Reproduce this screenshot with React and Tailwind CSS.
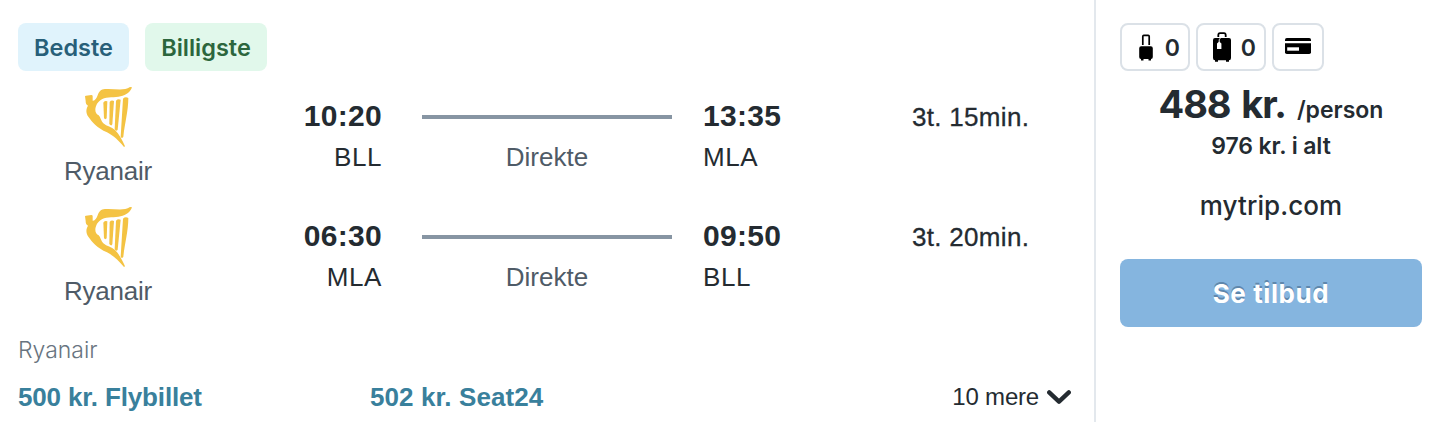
import clsx from "clsx";

const legs = [
  {
    airline: "Ryanair",
    departure: "10:20",
    from: "BLL",
    arrival: "13:35",
    to: "MLA",
    stops: "Direkte",
    duration: "3t. 15min.",
  },
  {
    airline: "Ryanair",
    departure: "06:30",
    from: "MLA",
    arrival: "09:50",
    to: "BLL",
    stops: "Direkte",
    duration: "3t. 20min.",
  },
];

function HarpLogo() {
  return (
    <svg width="47" height="60" viewBox="0 0 141 180" fill="#f4c343">
      <path d="M0 28Q0 26 3 26L19 24Q23 24 23 28L23 41C30 42 34 35 38 25C42 13 48 7 60 6C88 4 115 13 135 0L141 1C137 14 124 24 107 28C90 33 66 29 52 36C38 43 31 57 31 69C31 77 35 82 41 85C46 89 48 102 55 109C65 118 80 120 90 129C103 142 112 160 120 178L117 180C101 161 87 147 66 136C36 122 22 106 10 89C1 76 4 64 9 56C3 53 2 48 2 42Z" />
      <path d="M55 47Q58 39 67 43L65 94Q61 99 57 94Z" />
      <path d="M74 45Q79 38 87 42L82 112Q79 119 73 111Z" />
      <path d="M93 41Q99 34 107 38L98 128Q94 135 89 127Z" />
      <path d="M114 35Q121 28 130 33C130 72 119 110 115 149Q111 156 107 149Z" />
    </svg>
  );
}

function CabinBag() {
  return (
    <svg width="14" height="27" viewBox="0 0 14 27">
      <path d="M3.8 11V2.6Q3.8 1.4 4.8 1.4H9.2Q10.2 1.4 10.2 2.6V11" fill="none" stroke="#000" strokeWidth="1.7" />
      <path d="M2.2 12.2H11.8Q13.8 12.2 13.8 14.2V23Q13.8 25 12 25V26.4H9.5V25H4.5V26.4H2V25Q.2 25 .2 23V14.2Q.2 12.2 2.2 12.2Z" />
    </svg>
  );
}

function Suitcase() {
  return (
    <svg width="18" height="30" viewBox="0 0 18 30">
      <path d="M5.3 5V3.2Q5.3 1.2 7 1.2H11Q12.7 1.2 12.7 3.2V5" fill="none" stroke="#000" strokeWidth="1.8" />
      <path d="M2 6H16Q18 6 18 8V26Q18 28.3 16 28.3V29.8H13V28.3H5V29.8H2V28.3Q0 28.3 0 26V8Q0 6 2 6Z" />
      <path d="M4 11.4L6.2 9.6L8.4 11.4V17H4Z" fill="#fff" />
      <path d="M6.2 10.5V7.8L7.6 5.6" fill="none" stroke="#fff" strokeWidth=".9" />
    </svg>
  );
}

function PaymentCard() {
  return (
    <svg width="26" height="16" viewBox="0 0 26 16">
      <path d="M1.8 0H24.2Q26 0 26 1.8V3H0V1.8Q0 0 1.8 0Z" />
      <path d="M0 5.2H26V14.2Q26 16 24.2 16H1.8Q0 16 0 14.2Z" />
      <path d="M2.2 9.3H14V12.7H2.2Z" fill="#fff" />
    </svg>
  );
}

function Badge({ className, children }) {
  return (
    <span
      className={clsx(
        "flex h-12 items-center justify-center rounded-lg pt-[2px] text-[23.5px] font-semibold",
        className
      )}
    >
      {children}
    </span>
  );
}

function Leg({ leg }) {
  return (
    <div className="flex h-[120px]">
      <div className="flex w-[180px] flex-col items-center">
        <HarpLogo />
        <span className="mt-[8px] text-[26px] leading-8 tracking-[-0.2px] text-[#4f5b67]">{leg.airline}</span>
      </div>
      <div className="flex w-[184px] flex-col items-end pt-[11px]">
        <span className="text-[30px] leading-9 font-bold tracking-[0.3px]">{leg.departure}</span>
        <span className="mt-[7px] text-[26px] leading-8 tracking-[0.6px]">{leg.from}</span>
      </div>
      <div className="ml-10 flex w-[250px] flex-col items-center pt-[28px]">
        <div className="h-1 w-full bg-[#8795a3]" />
        <span className="mt-[22px] text-[26px] leading-8 text-[#4f5b67]">{leg.stops}</span>
      </div>
      <div className="ml-[31px] flex w-[209px] flex-col pt-[11px]">
        <span className="text-[30px] leading-9 font-bold tracking-[0.3px]">{leg.arrival}</span>
        <span className="mt-[7px] text-[26px] leading-8 tracking-[0.6px]">{leg.to}</span>
      </div>
      <span className="pt-[14px] text-[26px] leading-8 tracking-[0.3px] [-webkit-text-stroke:0.3px_#242b31]">
        {leg.duration}
      </span>
    </div>
  );
}

export default function App() {
  return (
    <div className="flex h-[422px] w-[1446px] overflow-hidden bg-white font-['Liberation_Sans',sans-serif] text-[#242b31]">
      <main className="flex w-[1094px] flex-col pt-[23px] pl-[18px]">
        <div className="flex gap-4 font-[Inter,sans-serif]">
          <Badge className="w-[111px] bg-[#e0f3fc] text-[#285f79]">Bedste</Badge>
          <Badge className="w-[122px] bg-[#e1f8eb] text-[#2c663d]">Billigste</Badge>
        </div>
        <div className="mt-4">
          {legs.map((leg) => (
            <Leg key={leg.departure} leg={leg} />
          ))}
        </div>
        <span className="mt-[7px] font-[Inter,sans-serif] text-[23px] leading-8 font-light text-[#687480]">
          Ryanair
        </span>
        <div className="mt-[15px] flex items-center text-[26px] leading-8 font-bold text-[#39809c]">
          <a className="w-[352px] tracking-[-0.15px]">500 kr. Flybillet</a>
          <a className="tracking-[0.1px]">502 kr. Seat24</a>
          <button className="mr-[23px] ml-auto flex items-center gap-2 text-[24px] font-normal tracking-[-0.2px] text-[#242b31]">
            10 mere
            <svg
              width="24"
              height="15"
              viewBox="0 0 24 15"
              fill="none"
              stroke="#242b31"
              strokeWidth="4.4"
              strokeLinecap="round"
              strokeLinejoin="round"
            >
              <path d="M2.2 2.4L12 11.6L21.8 2.4" />
            </svg>
          </button>
        </div>
      </main>

      <aside className="flex w-[352px] flex-col items-center border-l-2 border-[#e3e8ed] px-6 pt-[23px] font-[Inter,sans-serif]">
        <div className="flex gap-[6px] self-start text-[23px] font-semibold">
          <div className="flex h-12 w-[70px] items-center justify-end gap-3 rounded-lg border-2 border-[#dbe1e7] pr-[8px]">
            <CabinBag />
            <span className="pt-[2px]">0</span>
          </div>
          <div className="flex h-12 w-[70px] items-center justify-end gap-[10px] rounded-lg border-2 border-[#dbe1e7] pr-[8px]">
            <Suitcase />
            <span className="pt-[2px]">0</span>
          </div>
          <div className="flex h-12 w-[52px] items-center justify-center rounded-lg border-2 border-[#dbe1e7] pb-[2px]">
            <PaymentCard />
          </div>
        </div>
        <div className="mt-[9px] flex h-12 items-baseline gap-[11px] leading-[48px] whitespace-nowrap">
          <span className="text-[38px] font-bold tracking-[-1.1px] [word-spacing:3px]">488 kr.</span>
          <span className="text-[23px] font-semibold">/person</span>
        </div>
        <div className="mt-[2px] text-[23px] leading-8 font-semibold tracking-[-0.1px]">976 kr. i alt</div>
        <div className="mt-[28px] text-[26px] leading-8 font-medium tracking-[0.1px]">mytrip.com</div>
        <button className="mt-[37px] h-[68px] w-full rounded-lg bg-[#85b5df] text-[26px] font-bold tracking-[0.6px] text-white [text-shadow:0_-2px_0_#5f87ac]">
          Se tilbud
        </button>
      </aside>
    </div>
  );
}
